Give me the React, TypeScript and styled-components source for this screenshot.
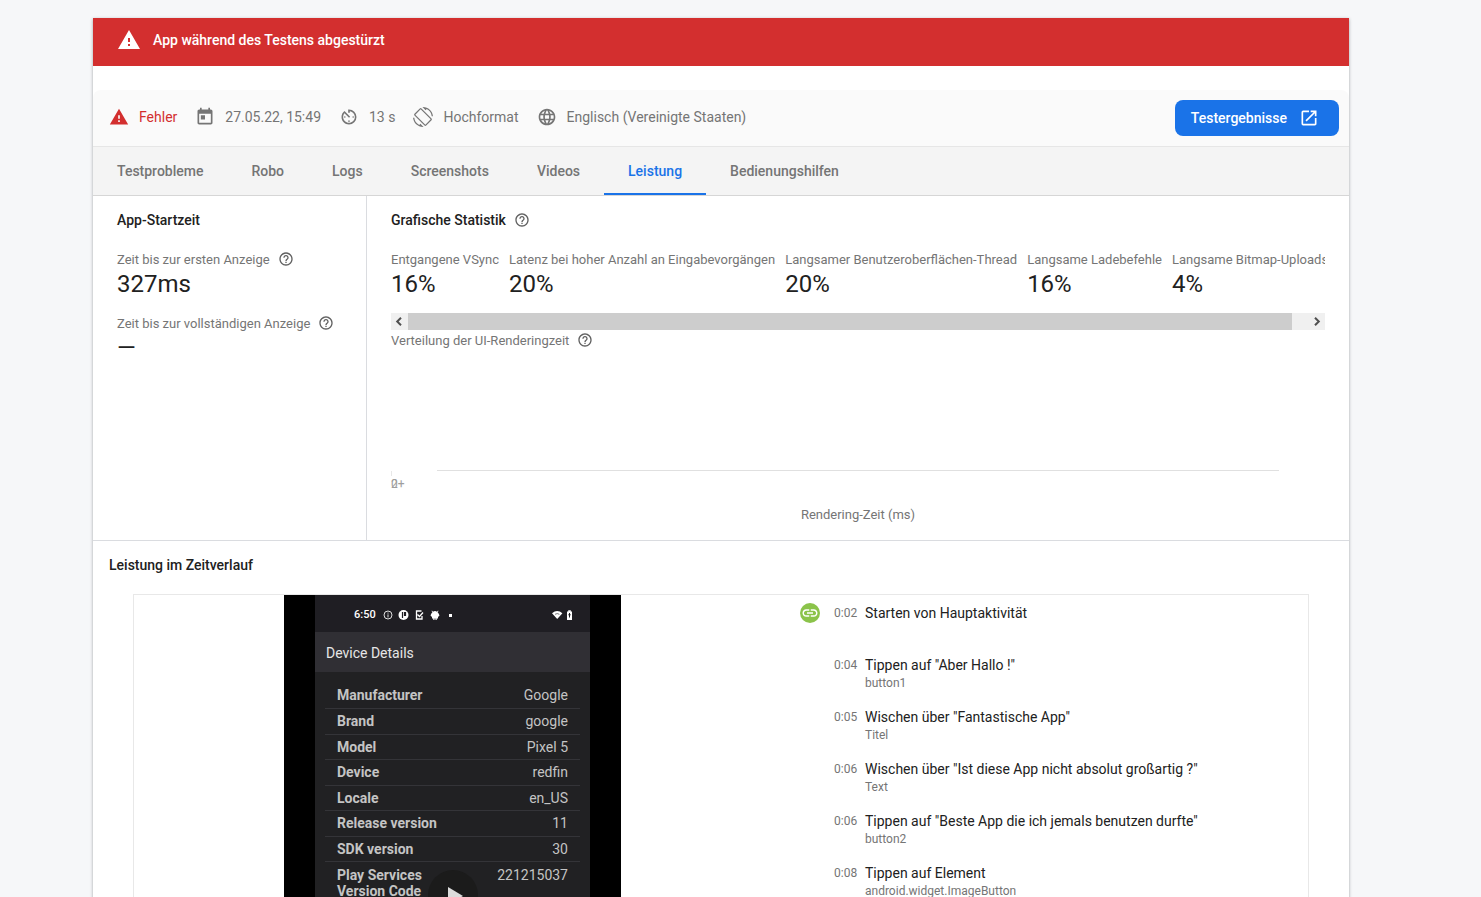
import React from 'react';
import styled, { createGlobalStyle } from 'styled-components';
import {
  MdWarning,
  MdAvTimer,
  MdScreenRotation,
  MdLanguage,
  MdOpenInNew,
  MdHelpOutline,
  MdLink,
} from 'react-icons/md';

const color = {
  page: '#f6f7f9',
  red: '#d32f2f',
  blue: '#1a73e8',
  text: '#212121',
  muted: '#757575',
  line: '#dadce0',
};

const GlobalStyle = createGlobalStyle`
  *, *::before, *::after { box-sizing: border-box; }
  body {
    margin: 0;
    background: ${color.page};
    color: ${color.text};
    font: 400 14px/20px Roboto, Arial, sans-serif;
  }
  button { font: inherit; border: 0; padding: 0; cursor: pointer; }
`;

const Page = styled.div`
  height: 100vh;
  overflow: hidden auto;
  scrollbar-width: none;
  padding: 18px 132px 24px 93px;
`;

const Card = styled.main`
  background: #fff;
  box-shadow: 0 1px 3px rgba(60, 64, 67, 0.45);
`;

const Banner = styled.div`
  display: flex;
  align-items: center;
  gap: 12px;
  height: 48px;
  padding: 0 24px 4px;
  background: ${color.red};
  color: #fff;
  font-weight: 500;
`;

const Summary = styled.header`
  display: flex;
  align-items: center;
  gap: 18px;
  height: 57px;
  margin-top: 24px;
  padding: 0 10px 0 16px;
  background: #fafafa;
  border-bottom: 1px solid #e6e6e6;
  border-radius: 8px 8px 0 0;
`;

const Fact = styled.span<{ $error?: boolean }>`
  display: flex;
  align-items: center;
  gap: 10px;
  padding-bottom: 2px;
  color: ${(p) => (p.$error ? color.red : color.muted)};
  white-space: nowrap;
`;

const ResultsButton = styled.button`
  display: flex;
  align-items: center;
  gap: 12px;
  height: 36px;
  margin-left: auto;
  padding: 0 20px 0 16px;
  border-radius: 8px;
  background: ${color.blue};
  color: #fff;
  font-weight: 500;
`;

const Tabs = styled.nav`
  display: flex;
  height: 49px;
  background: #f4f4f4;
  border-bottom: 1px solid #d6d6d6;
`;

const Tab = styled.a<{ $active?: boolean }>`
  padding: 14px 24px 12px;
  border-bottom: 2px solid ${(p) => (p.$active ? color.blue : 'transparent')};
  color: ${(p) => (p.$active ? color.blue : color.muted)};
  font-weight: 500;
  text-decoration: none;
`;

const Panels = styled.div`
  display: grid;
  grid-template-columns: 274px minmax(0, 1fr);
  border-bottom: 1px solid ${color.line};
`;

const Panel = styled.section<{ $divided?: boolean }>`
  min-width: 0;
  padding: 0 24px 15px;
  border-right: ${(p) => (p.$divided ? `1px solid ${color.line}` : '0')};
`;

const Heading = styled.h2`
  display: flex;
  align-items: center;
  gap: 8px;
  height: 48px;
  margin: 0;
  font-size: 14px;
  font-weight: 500;
`;

const MetricRow = styled.div`
  display: flex;
  gap: 10px;
  overflow: hidden;
`;

const Metric = styled.div`
  flex: none;
  padding: 5px 0 9px;
`;

const Label = styled.div`
  display: flex;
  align-items: flex-start;
  gap: 8px;
  height: 20px;
  color: ${color.muted};
  font-size: 13px;
  line-height: 22px;
  white-space: nowrap;

  svg {
    margin-top: 2px;
  }
`;

const Value = styled.div`
  font-size: 24px;
  line-height: 30px;
`;

const Help = styled(MdHelpOutline)`
  flex: none;
  color: #616161;
`;

const ScrollTrack = styled.div`
  display: flex;
  height: 17px;
  margin-top: 5px;
  background: #f0f0f0;
`;

const ScrollButton = styled.button`
  display: grid;
  place-items: center;
  width: 17px;
  background: #f0f0f0;
`;

const ScrollThumb = styled.div`
  flex: 1;
  margin-right: 16px;
  background: #cdcdcd;
`;

const Chart = styled.figure`
  margin: 0;
  padding-top: 120px;
`;

const Baseline = styled.div`
  height: 1px;
  margin: 0 46px;
  background: #e0e0e0;
`;

const Tick = styled.div`
  width: 1px;
  height: 5px;
  background: #e8e8e8;
`;

const TickLabels = styled.div`
  display: grid;
  justify-items: start;
  color: #9e9e9e;
  font-size: 12px;
  line-height: 16px;

  span {
    grid-area: 1 / 1;
  }
`;

const AxisTitle = styled.figcaption`
  padding-top: 13px;
  color: ${color.muted};
  font-size: 13px;
  text-align: center;
`;

const Timeline = styled.section`
  padding: 0 16px 24px;
`;

const TimelineBox = styled.div`
  display: grid;
  grid-template-columns: 637fr 537fr;
  margin: 5px 24px 0;
  border: 1px solid #e8e8e8;
`;

const Video = styled.div`
  position: relative;
  justify-self: center;
  width: 337px;
  aspect-ratio: 337 / 599;
  padding: 0 31px;
  background: #000;
`;

const Screen = styled.div`
  height: 100%;
  background: #212123;
  color: #c4c4c4;
`;

const StatusBar = styled.div`
  display: flex;
  align-items: center;
  justify-content: space-between;
  height: 37px;
  padding: 2px 17px 0 39px;
  background: #1f1e23;
  color: #fff;
  font-size: 11px;
  font-weight: 500;
`;

const StatusGroup = styled.span`
  display: flex;
  align-items: center;
  gap: 6px;
`;

const AppBar = styled.div`
  height: 40px;
  padding: 11px;
  background: #302f34;
  color: #e6e6e6;
`;

const DeviceTable = styled.table`
  width: 255px;
  margin: 11px 10px 0;
  border-collapse: collapse;

  tr {
    height: 25px;
    border-bottom: 1px solid #343438;
  }
  tr:nth-child(even) {
    height: 26px;
  }
  th,
  td {
    padding: 0 12px;
    line-height: 20px;
    vertical-align: middle;
  }
  th {
    font-weight: 700;
    text-align: left;
  }
  td {
    text-align: right;
  }
  tr:last-child th,
  tr:last-child td {
    padding-top: 5px;
    line-height: 16px;
    vertical-align: top;
  }
`;

const PlayButton = styled.button`
  position: absolute;
  top: 50%;
  left: 50%;
  display: grid;
  place-items: center;
  width: 50px;
  height: 50px;
  border-radius: 50%;
  background: #1b1b1b;
  transform: translate(-50%, -50%);
`;

const Events = styled.ol`
  margin: 0;
  padding: 0 0 0 29px;
  list-style: none;
`;

const Event = styled.li`
  display: grid;
  grid-template-columns: 34px 31px 1fr;
  height: 52px;
  padding-top: 8px;
`;

const EventIcon = styled.span`
  display: grid;
  place-items: center;
  width: 20px;
  height: 20px;
  border-radius: 50%;
  background: #8bc34a;
  color: #fff;
`;

const EventTime = styled.time`
  color: ${color.muted};
  font-size: 12px;
`;

const EventTarget = styled.div`
  color: ${color.muted};
  font-size: 12px;
  line-height: 16px;
`;

const tabs = ['Testprobleme', 'Robo', 'Logs', 'Screenshots', 'Videos', 'Leistung', 'Bedienungshilfen'];

const metrics = [
  ['Entgangene VSync', '16%'],
  ['Latenz bei hoher Anzahl an Eingabevorgängen', '20%'],
  ['Langsamer Benutzeroberflächen-Thread', '20%'],
  ['Langsame Ladebefehle', '16%'],
  ['Langsame Bitmap-Uploads', '4%'],
];

const device = [
  ['Manufacturer', 'Google'],
  ['Brand', 'google'],
  ['Model', 'Pixel 5'],
  ['Device', 'redfin'],
  ['Locale', 'en_US'],
  ['Release version', '11'],
  ['SDK version', '30'],
  ['Play Services Version Code', '221215037'],
];

const events = [
  { time: '0:02', title: 'Starten von Hauptaktivität', target: '', link: true },
  { time: '0:04', title: 'Tippen auf "Aber Hallo !"', target: 'button1' },
  { time: '0:05', title: 'Wischen über "Fantastische App"', target: 'Titel' },
  { time: '0:06', title: 'Wischen über "Ist diese App nicht absolut großartig ?"', target: 'Text' },
  { time: '0:06', title: 'Tippen auf "Beste App die ich jemals benutzen durfte"', target: 'button2' },
  { time: '0:08', title: 'Tippen auf Element', target: 'android.widget.ImageButton' },
];

const CalendarIcon = () => (
  <svg width="20" height="20" viewBox="0 0 24 24" fill="currentColor">
    <path d="M19 3h-1V1h-2v2H8V1H6v2H5c-1.110 0-2 .9-2 2v14c0 1.100.89 2 2 2h14c1.100 0 2-.9 2-2V5c0-1.100-.9-2-2-2zm0 16H5V8h14v11zM7 10h5v5H7z" />
  </svg>
);

const Chevron = ({ right }: { right?: boolean }) => (
  <svg width="9" height="9" viewBox="0 0 9 9" fill="none" stroke="#505050" strokeWidth="2">
    <path d={right ? 'M3 .7 6.8 4.5 3 8.3' : 'M6 .7 2.2 4.5 6 8.3'} />
  </svg>
);

const NotificationIcons = () => (
  <svg width="70" height="12" viewBox="0 0 70 12" fill="none">
    <circle cx="6" cy="6" r="4" stroke="#ddd" />
    <path d="M6 3.6v1M6 5.4v3" stroke="#ddd" />
    <circle cx="21.500" cy="6" r="5" fill="#fff" />
    <path d="M20.500 3v6M22.500 3.500h1v3h-1z" stroke="#1f1e23" strokeWidth="1.200" />
    <path d="M39.500 2h-5v8h5.500V7M35.500 5.500l2 2 3.500-4" stroke="#fff" strokeWidth="1.300" />
    <path d="M50 1.500l1 1.200a4 4 0 0 1 4 0l1-1.200.5.400-.9 1.300Q57 4.500 57.500 6.500L56 8v1.500h-1.300V11h-1.200V9.500h-1V11h-1.200V9.500H50V8L48.500 6.500Q49 4.500 50.400 3.200L49.500 1.900z" fill="#fff" />
    <rect x="67" y="5" width="3" height="3" fill="#fff" />
  </svg>
);

const SignalIcons = () => (
  <svg width="21" height="12" viewBox="0 0 21 12">
    <path d="M0 4.200Q5.200-.2 10.400 4.200L5.200 10z" fill="#fff" />
    <path d="M3 5.300Q5.200 3.800 7.400 5.300" stroke="#1f1e23" strokeWidth=".6" fill="none" />
    <path d="M15 2.500h1.200V1.200h2.600v1.300H20V11h-5z" fill="#fff" />
    <path d="M17.500 4v4.500M16.300 5.800h2.400" stroke="#1f1e23" />
  </svg>
);

export default function App() {
  return (
    <>
      <GlobalStyle />
      <Page>
        <Card>
          <Banner role="alert">
            <MdWarning size={24} />
            App während des Testens abgestürzt
          </Banner>

          <Summary>
            <Fact $error><MdWarning size={20} />Fehler</Fact>
            <Fact><CalendarIcon />27.05.22, 15:49</Fact>
            <Fact><MdAvTimer size={20} />13 s</Fact>
            <Fact><MdScreenRotation size={20} />Hochformat</Fact>
            <Fact><MdLanguage size={20} />Englisch (Vereinigte Staaten)</Fact>
            <ResultsButton type="button">
              Testergebnisse
              <MdOpenInNew size={20} />
            </ResultsButton>
          </Summary>

          <Tabs>
            {tabs.map((name) => (
              <Tab key={name} href="#" $active={name === 'Leistung'}>{name}</Tab>
            ))}
          </Tabs>

          <Panels>
            <Panel $divided>
              <Heading>App-Startzeit</Heading>
              <Metric>
                <Label>Zeit bis zur ersten Anzeige<Help size={16} /></Label>
                <Value>327ms</Value>
              </Metric>
              <Metric>
                <Label>Zeit bis zur vollständigen Anzeige<Help size={16} /></Label>
                <Value>—</Value>
              </Metric>
            </Panel>

            <Panel>
              <Heading>Grafische Statistik<Help size={16} /></Heading>
              <MetricRow>
                {metrics.map(([label, value]) => (
                  <Metric key={label}>
                    <Label>{label}</Label>
                    <Value>{value}</Value>
                  </Metric>
                ))}
              </MetricRow>
              <ScrollTrack>
                <ScrollButton type="button" aria-label="Nach links"><Chevron /></ScrollButton>
                <ScrollThumb />
                <ScrollButton type="button" aria-label="Nach rechts"><Chevron right /></ScrollButton>
              </ScrollTrack>
              <Label>Verteilung der UI-Renderingzeit<Help size={16} /></Label>
              <Chart>
                <Baseline />
                <Tick />
                <TickLabels><span>0</span><span>2+</span></TickLabels>
                <AxisTitle>Rendering-Zeit (ms)</AxisTitle>
              </Chart>
            </Panel>
          </Panels>

          <Timeline>
            <Heading>Leistung im Zeitverlauf</Heading>
            <TimelineBox>
              <Video>
                <Screen>
                  <StatusBar>
                    <StatusGroup>6:50<NotificationIcons /></StatusGroup>
                    <SignalIcons />
                  </StatusBar>
                  <AppBar>Device Details</AppBar>
                  <DeviceTable>
                    <tbody>
                      {device.map(([name, value]) => (
                        <tr key={name}>
                          <th scope="row">{name}</th>
                          <td>{value}</td>
                        </tr>
                      ))}
                    </tbody>
                  </DeviceTable>
                </Screen>
                <PlayButton type="button" aria-label="Video abspielen">
                  <svg width="20" height="20" viewBox="0 0 20 20" fill="#dcdcdc">
                    <path d="M5 2v18l15-9z" />
                  </svg>
                </PlayButton>
              </Video>
              <Events>
                {events.map((e) => (
                  <Event key={e.title}>
                    <span>{e.link && <EventIcon><MdLink size={18} /></EventIcon>}</span>
                    <EventTime>{e.time}</EventTime>
                    <div>
                      {e.title}
                      <EventTarget>{e.target}</EventTarget>
                    </div>
                  </Event>
                ))}
              </Events>
            </TimelineBox>
          </Timeline>
        </Card>
      </Page>
    </>
  );
}
